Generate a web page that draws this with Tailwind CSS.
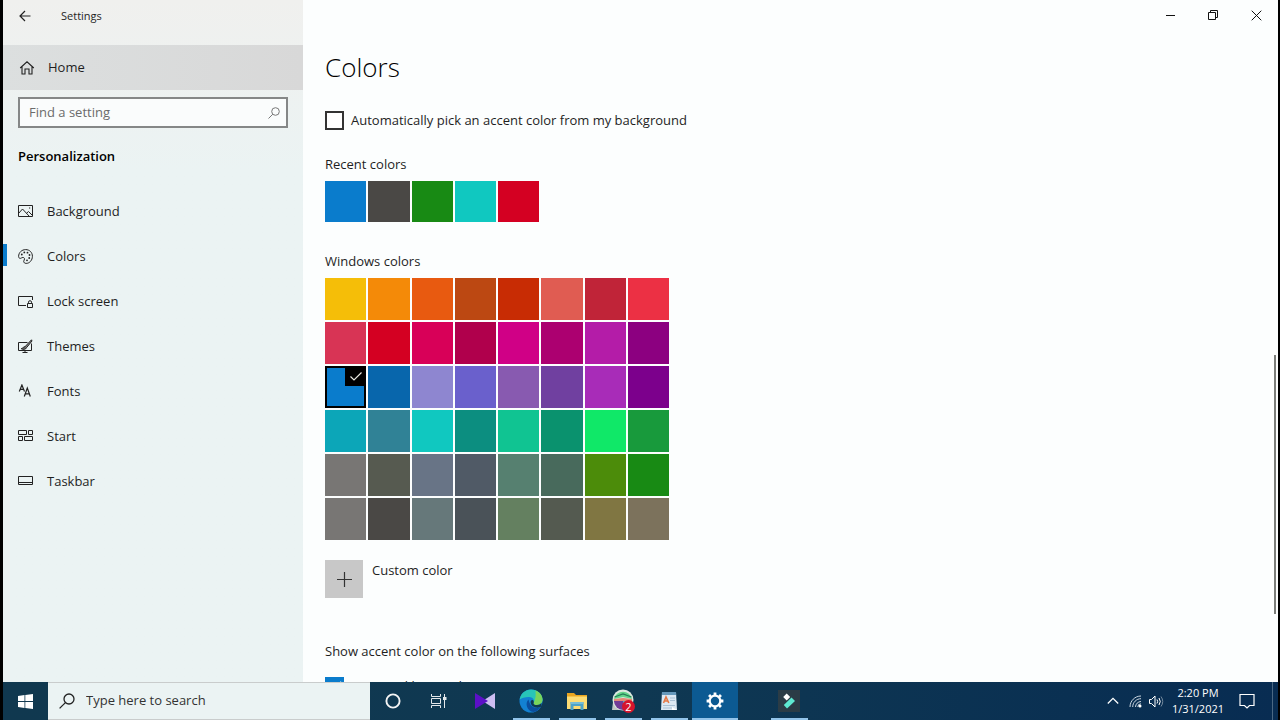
<!DOCTYPE html>
<html lang="en">
<head>
  <meta charset="UTF-8" />
  <meta name="viewport" content="width=device-width, initial-scale=1.0" />
  <title>Settings</title>
  <script src="https://cdn.jsdelivr.net/npm/@tailwindcss/browser@4"></script>
</head>
<body class="bg-black font-['Open_Sans','Noto_Sans',sans-serif] text-[13px] text-[#1f1f1f]">
  <div class="h-screen flex flex-col overflow-hidden border-l-3 border-r-2 border-black">
    <div class="flex flex-1 min-h-0">

      <!-- Sidebar -->
      <aside class="w-[300px] shrink-0 bg-linear-to-b from-[#f0f0ee] via-[#ebf3f3] via-25% to-[#ebf3f3]">
        <div class="h-8 flex items-center pl-4">
          <button type="button" aria-label="Back" class="w-[42px]">
            <svg class="w-3 h-3" viewBox="0 0 12 12" fill="none" stroke="#222" stroke-width="1.2"><path d="M11.5 6H1M6 1L1 6l5 5" /></svg>
          </button>
          <span class="text-[11px]">Settings</span>
        </div>
        <a href="#" class="mt-[13px] h-[45px] flex items-center pt-px pl-4 gap-[13px] bg-linear-to-r from-[#dcdfdf] to-[#d8d8d8]">
          <svg class="w-4 h-4" viewBox="0 0 16 16" fill="none" stroke="#222" stroke-width="1.1"><path d="M1.2 8L8 1.8 14.8 8M3 6.5V14h3V9h4v5h3V6.5" /></svg>
          <span>Home</span>
        </a>
        <div class="mt-[7px] ml-[15px] w-[270px] h-[31px] flex items-center border-2 border-[#858787] bg-[#fafcfc] pl-[9px] pr-1.5">
          <input type="text" aria-label="Find a setting" placeholder="Find a setting" class="flex-1 min-w-0 outline-none placeholder:text-[#6b6b6b]" />
          <svg class="w-3 h-3" viewBox="0 0 12 12" fill="none" stroke="#777" stroke-width="1"><circle cx="7.5" cy="4.5" r="3.8" /><path d="M4.800 7.200L.5 11.500" /></svg>
        </div>
        <h2 class="mt-[18px] pl-[15px] leading-5 font-semibold text-black">Personalization</h2>
        <nav class="mt-[23px]">
          <a href="#" class="h-[45px] flex items-center pl-[15px] gap-[14px]">
            <svg class="w-[15px] h-[15px]" viewBox="0 0 15 15" fill="none" stroke="#222"><path d="M.5 1.500h14v11H.5zM.5 9.500L4.500 5l7 7.500M8.500 9.300L10.500 7.500l4 4" /><path d="M11 4h1.200" /></svg>
            <span>Background</span>
          </a>
          <a href="#" aria-current="page" class="relative h-[45px] flex items-center pl-[15px] gap-[14px]">
            <span class="absolute left-0 top-[10px] w-1 h-[22px] bg-[#0a7ccc]"></span>
            <svg class="w-[15px] h-[15px]" viewBox="0 0 15 15" fill="none" stroke="#222"><path d="M.6 7.500C.6 3.500 3.800.6 7.700.6c3.900 0 6.700 2.900 6.700 6.700 0 4-2.900 7.100-6.200 7.100-1.500 0-2.500-.9-2.500-2 0-1 .8-1.400.8-2.400 0-1-.7-1.600-1.600-1.600-1.300 0-1.500 1-2.600 1C1.300 9.400.6 8.600.6 7.500z" /><g fill="#222" stroke="none"><circle cx="3.800" cy="5.500" r=".9" /><circle cx="6.300" cy="3.400" r=".9" /><circle cx="9.500" cy="3.700" r=".9" /><circle cx="11.500" cy="6" r=".9" /><circle cx="11.200" cy="9" r=".9" /><circle cx="9" cy="11.300" r=".9" /></g></svg>
            <span>Colors</span>
          </a>
          <a href="#" class="h-[45px] flex items-center pl-[15px] gap-[14px]">
            <svg class="w-[15px] h-[15px]" viewBox="0 0 15 15" fill="none" stroke="#222"><path d="M8 11.500H.5v-9h14V6M9.500 9.500h5v4h-5zM10.500 9.500V8.200a1.500 1.500 0 0 1 3 0v1.300" /></svg>
            <span>Lock screen</span>
          </a>
          <a href="#" class="h-[45px] flex items-center pl-[15px] gap-[14px]">
            <svg class="w-[15px] h-[15px]" viewBox="0 0 15 15" fill="none" stroke="#222"><path d="M9.500 3.500h-9v8h13v-7M7 11.500v2M4.500 13.500h5" /><path d="M13.500.8L7.200 7.500l1.300 1.200L14 2z" fill="#888" /><path d="M7 7.700c-1.500-.1-1.800 1.400-3.800 2 1.800 1.100 4.800.9 5.100-.9" fill="#666" /></svg>
            <span>Themes</span>
          </a>
          <a href="#" class="h-[45px] flex items-center pl-[15px] gap-[14px]">
            <svg class="w-[15px] h-[15px]" viewBox="0 0 15 15" fill="none" stroke="#222" stroke-width="1.200"><path d="M1.300 7.500L3.900 1l2.600 6.500M2.200 5.300h3.400M6.300 12.500l3-8.500 3 8.500M7.300 9.800h4" /></svg>
            <span>Fonts</span>
          </a>
          <a href="#" class="h-[45px] flex items-center pl-[15px] gap-[14px]">
            <svg class="w-[15px] h-[15px]" viewBox="0 0 15 15" fill="none" stroke="#222"><path d="M.5 1.500h8v4h-8zM10.500 1.500h4v4h-4zM.5 7.500h4v4h-4zM6.500 7.500h8v4h-8z" /></svg>
            <span>Start</span>
          </a>
          <a href="#" class="h-[45px] flex items-center pl-[15px] gap-[14px]">
            <svg class="w-[15px] h-[15px]" viewBox="0 0 15 15" fill="none" stroke="#222"><path d="M.5 2.500h14v8H.5zM.5 8.500h14" /></svg>
            <span>Taskbar</span>
          </a>
        </nav>
      </aside>

      <!-- Colors page -->
      <main class="relative flex-1 min-w-0 overflow-hidden bg-[#fcfefe]">
        <div class="h-[30px] flex justify-end">
          <button type="button" aria-label="Minimize" class="w-[43px] flex items-center justify-center">
            <svg class="w-[11px] h-[11px]" viewBox="0 0 11 11" fill="none" stroke="#111"><path d="M1 5.500h9" /></svg>
          </button>
          <button type="button" aria-label="Restore" class="w-[43px] flex items-center justify-center">
            <svg class="w-[11px] h-[11px]" viewBox="0 0 11 11" fill="none" stroke="#111"><path d="M.5 2.500h7v7h-7zM2.500 2.500v-2h7v7h-2" /></svg>
          </button>
          <button type="button" aria-label="Close" class="w-[43px] flex items-center justify-center">
            <svg class="w-[11px] h-[11px]" viewBox="0 0 11 11" fill="none" stroke="#111"><path d="M.7.7l9.600 9.600M10.300.7L.7 10.300" /></svg>
          </button>
        </div>
        <div class="pl-[22px]">
          <h1 class="mt-[21px] text-[26px] font-light leading-8 text-black">Colors</h1>
          <label class="mt-[28px] h-5 flex items-start gap-[7px] leading-[18px]">
            <input type="checkbox" class="appearance-none w-[19px] h-[19px] border-2 border-[#333] bg-white" />
            <span>Automatically pick an accent color from my background</span>
          </label>

          <h2 class="mt-[23px] leading-5">Recent colors</h2>
          <div id="recentColors" class="mt-[7px] w-[344px] grid grid-cols-8 gap-[2px]"></div>

          <h2 class="mt-[29px] leading-5">Windows colors</h2>
          <div id="windowsColors" class="mt-[7px] w-[344px] grid grid-cols-8 gap-[2px]"></div>

          <div class="mt-5 flex gap-[9px]">
            <button type="button" id="customColor" aria-labelledby="customLabel" class="w-[38px] h-[38px] flex items-center justify-center bg-[#c8c8c8]">
              <svg class="w-[15px] h-[15px]" viewBox="0 0 15 15" fill="none" stroke="#333" stroke-width="1.200"><path d="M7.500 0v15M0 7.500h15" /></svg>
            </button>
            <span id="customLabel" class="leading-5">Custom color</span>
          </div>

          <h2 class="mt-[43px] leading-5">Show accent color on the following surfaces</h2>
          <label class="mt-4 h-5 flex items-start gap-[7px] leading-[18px]">
            <span class="relative w-[19px] h-[19px]">
              <input type="checkbox" checked class="block appearance-none w-[19px] h-[19px] bg-[#0a7ccc]" />
              <svg class="absolute inset-0 w-[19px] h-[19px] pointer-events-none" viewBox="0 0 20 20" fill="none" stroke="#fff" stroke-width="1.300"><path d="M3 10l4.500 4.500L17 5" /></svg>
            </span>
            <span>Start, taskbar, and action center</span>
          </label>
        </div>
        <div class="absolute right-[2px] top-[355px] w-[2px] h-[259px] bg-[#7c7e7a]"></div>
      </main>
    </div>

    <!-- Taskbar -->
    <footer class="h-[38px] shrink-0 flex bg-linear-to-r from-[#10384f] via-[#0f3852] to-[#082c52]">
      <button type="button" aria-label="Start menu" class="w-[45px] flex items-center justify-center">
        <svg class="w-[15px] h-[15px]" viewBox="0 0 15 15" fill="#fff"><path d="M0 2l6.500-.9v6H0zM7.300 1L15 0v7.100H7.300zM0 7.900h6.500v6L0 13zM7.300 7.900H15V15l-7.700-1z" /></svg>
      </button>
      <label class="w-[322px] flex items-center gap-[11px] pl-[11px] border-y border-[#c9cccc] bg-[#ebf3f3]">
        <svg class="w-4 h-4" viewBox="0 0 16 16" fill="none" stroke="#222" stroke-width="1.300"><circle cx="10" cy="6" r="5" /><path d="M6.400 9.600L.6 15.400" /></svg>
        <input type="text" aria-label="Type here to search" placeholder="Type here to search" class="flex-1 min-w-0 outline-none placeholder:text-[#333]" />
      </label>
      <button type="button" aria-label="Cortana" class="w-[46px] flex items-center justify-center">
        <svg class="w-4 h-4" viewBox="0 0 16 16" fill="none" stroke="#f4f4f4" stroke-width="1.900"><circle cx="8" cy="8" r="6.600" /></svg>
      </button>
      <button type="button" aria-label="Task view" class="w-[46px] flex items-center justify-center">
        <svg class="w-4 h-4" viewBox="0 0 16 16" fill="none" stroke="#e4e9ec"><path d="M.5 1v2.500h9V1M.5 5.500h9v5h-9zM.5 15v-2.500h9V15M13.500 1v14" /><path d="M12 5.500h3.500" stroke-width="3" /></svg>
      </button>
      <button type="button" aria-label="Media player" class="w-[46px] flex items-center justify-center">
        <svg class="w-5 h-4" viewBox="0 0 20 16"><path d="M20 0v16L7.500 8z" fill="#cdbdf2" /><path d="M0 0l13 8L0 16z" fill="#5c10c8" /></svg>
      </button>
      <button type="button" aria-label="Edge" class="relative w-[46px] flex items-center justify-center">
        <svg class="w-6 h-6" viewBox="0 0 24 24"><circle cx="12" cy="12" r="11.500" fill="#1381d2" /><path d="M.7 10.500C1.700 4.700 6.300.5 12 .5c6.600 0 11.500 4.700 11.500 10 0 3.300-2.300 5.500-5.500 5.500-2.400 0-4-1-3.400-2.100 1-1.500.5-5.900-4.600-5.900-3.900 0-7.500 1-9.300 2.500z" fill="#28c5b8" /><path d="M16.500 1.500c4.200 1.600 7 5 7 9 0 3.300-2.300 5.500-5.500 5.500-2.400 0-4-1-3.400-2.100C16.500 11 17 6 16.500 1.500z" fill="#79d45c" /><path d="M9.500 10.500c-4 3.800-1.500 11.500 5 12.600 3-.6 5.700-2.600 7.200-5.100-3.800 1.900-10.400 1.400-12.200-7.500z" fill="#0b4e9e" /><path d="M14.600 13.900c-.6 1.100 1 2.100 3.400 2.100 1.900 0 3.400-.7 4.400-2l.2 3.600c-4.700 2.500-10.600.3-11-4.100-.2-1.800 1.300-3 2.400-2.200.7.600.9 1.700.6 2.600z" fill="#103850" /></svg>
        <span class="absolute bottom-0 left-[5px] w-[37px] h-[2px] bg-[#92c4ea]"></span>
      </button>
      <button type="button" aria-label="File Explorer" class="relative w-[46px] flex items-center justify-center">
        <svg class="w-5 h-[18px]" viewBox="0 0 20 18"><path d="M0 1h7l2 2h11v14H0z" fill="#e9a520" /><path d="M0 4.500h20V17H0z" fill="#fcdc74" /><path d="M3.500 10h13v8h-3v-4h-7v4h-3z" fill="#4da3c8" /><path d="M3.500 10h13v2h-13z" fill="#75bdd7" /></svg>
        <span class="absolute bottom-0 left-[5px] w-[37px] h-[2px] bg-[#92c4ea]"></span>
      </button>
      <button type="button" aria-label="Browser, 2 notifications" class="relative w-[46px] flex items-center justify-center">
        <svg class="w-6 h-6" viewBox="0 0 24 24"><path d="M2 13L1 21h10z" fill="#bfc6c4" /><circle cx="12" cy="11" r="10.500" fill="#dce8df" /><path d="M3 10a9.200 9.200 0 0 1 18 0l-9-2z" fill="#64d58a" /><path d="M3.500 8L12 5l8.500 3" fill="none" stroke="#277c57" stroke-width="1.300" /><path d="M3 10l9-1 9 1v3H3z" fill="#e38a76" /><path d="M3 12h18a9 9 0 0 1-18 0z" fill="#713b96" /><path d="M12 12h9l-3 6-6-2z" fill="#53a7ca" /></svg>
        <span class="absolute left-[22px] top-[18px] w-[13px] h-[13px] rounded-full bg-[#d5142d] text-white text-[11px] leading-[13px] text-center">2</span>
        <span class="absolute bottom-0 left-[5px] w-[37px] h-[2px] bg-[#92c4ea]"></span>
      </button>
      <button type="button" aria-label="WordPad" class="relative w-[46px] flex items-center justify-center">
        <svg class="w-[18px] h-5" viewBox="0 0 18 20"><path d="M2 1h14l1 18H1z" fill="#dce8f3" /><path d="M2 1h14v3H2z" fill="#6698bb" /><path d="M10 7h5M10 9.500h5M3 14.500h12M3 17h9" stroke="#a9c0d4" /><path d="M3.500 12L6 6l2.800 6M4.500 10h3.300" fill="none" stroke="#e57845" stroke-width="1.600" /><path d="M12 16l5 3h-5z" fill="#fff" /></svg>
        <span class="absolute bottom-0 left-[5px] w-[37px] h-[2px] bg-[#92c4ea]"></span>
      </button>
      <button type="button" aria-label="Settings" class="relative w-[46px] flex items-center justify-center bg-[#0c5a92]">
        <svg class="w-[18px] h-[18px]" viewBox="0 0 18 18" fill="none" stroke="#fff"><circle cx="9" cy="9" r="5.300" stroke-width="2.200" /><path d="M9 .6v3M9 14.400v3M.6 9h3M14.400 9h3M3.060 3.060l2.100 2.100M12.840 12.840l2.100 2.100M3.060 14.940l2.100-2.100M12.840 5.160l2.100-2.100" stroke-width="2.800" /></svg>
        <span class="absolute bottom-0 inset-x-0 h-[2px] bg-[#92c4ea]"></span>
      </button>
      <button type="button" aria-label="Filmora" class="relative ml-7 w-[46px] flex items-center justify-center">
        <svg class="w-[22px] h-[22px]" viewBox="0 0 22 22"><path d="M0 0h22v22H0z" fill="#2b3c46" /><path d="M8.700 3.500l3.500 3.500-3.500 3.500L5.200 7z" fill="#fff" /><path d="M13.500 7.500L17 11l-8 7.500L5.800 15z" fill="#5eead2" /></svg>
        <span class="absolute bottom-0 left-[5px] w-[37px] h-[2px] bg-[#92c4ea]"></span>
      </button>

      <div class="ml-auto flex items-center text-white">
        <button type="button" aria-label="Show hidden icons" class="w-[23px] flex justify-center">
          <svg class="w-3 h-3" viewBox="0 0 12 12" fill="none" stroke="#fff" stroke-width="1.300"><path d="M.8 8.500L6 3.300l5.200 5.200" /></svg>
        </button>
        <button type="button" aria-label="Network" class="w-[23px] flex justify-center">
          <svg class="w-[13px] h-[13px]" viewBox="0 0 13 13" fill="none" stroke="#cdd8e2"><path d="M1 12C1 5.900 5.900 1 12 1M3.700 12c0-4.600 3.700-8.300 8.300-8.300M6.500 12c0-3 2.500-5.500 5.500-5.500" /><circle cx="11" cy="11" r="1.500" fill="#fff" stroke="none" /><path d="M8.800 12a3.200 3.200 0 0 1 3.200-3.200" /></svg>
        </button>
        <button type="button" aria-label="Volume" class="w-[19px] flex justify-center">
          <svg class="w-[15px] h-[13px]" viewBox="0 0 15 13" fill="none" stroke="#fff"><path d="M.5 4.500h2L6 1v11L2.500 8.500h-2zM8 4.500q1.300 2 0 4M10 3q2.500 3.500 0 7" /><path d="M12 1.500q3.500 5 0 10" stroke="#71879c" /></svg>
        </button>
        <div class="w-16 text-center text-[11px] leading-4">
          <div>2:20 PM</div>
          <div>1/31/2021</div>
        </div>
        <button type="button" aria-label="Notifications" class="w-[34px] flex justify-center">
          <svg class="w-4 h-4" viewBox="0 0 16 16" fill="none" stroke="#fff" stroke-width="1.200"><path d="M1 1.500h14v11h-4.500L8 15l-2.500-2.500H1z" /></svg>
        </button>
        <div class="ml-2 mr-[5px] w-px h-[38px] bg-[#4a6884]"></div>
      </div>
    </footer>
  </div>

  <script>
    const recentColors = ["#0a7ccc", "#4a4845", "#188a14", "#10c8c0", "#d40022"];
    const windowsColors = [
      "#f5be08", "#f48a08", "#e85a10", "#bc4812", "#c82c04", "#e05c52", "#c02438", "#ec3044",
      "#d83455", "#d40022", "#d80058", "#b0004c", "#d00086", "#ac0070", "#b41ca8", "#8c0080",
      "#0a7ccc", "#0866ac", "#8e86d0", "#6a60cc", "#885ab0", "#7040a0", "#a82cb8", "#7c008c",
      "#0ca6b8", "#308296", "#10c8c0", "#0c8e80", "#10c492", "#0a926e", "#10e868", "#189a3c",
      "#787674", "#565a50", "#687486", "#505a66", "#568070", "#486a5c", "#4c8c0a", "#188a14",
      "#787674", "#4a4845", "#66787a", "#4a5258", "#648060", "#545a50", "#807642", "#7c725c"
    ];

    function addSwatch(container, color, height) {
      const button = document.createElement("button");
      button.type = "button";
      button.className = "swatch relative " + height;
      button.style.backgroundColor = color;
      button.setAttribute("aria-label", color);
      container.appendChild(button);
      return button;
    }

    function selectSwatch(button) {
      button.setAttribute("aria-pressed", "true");
      button.innerHTML = `
        <span class="absolute inset-0 border-2 border-black"></span>
        <span class="absolute right-0 top-0 w-[21px] h-5 flex items-center justify-center bg-black">
          <svg class="w-3 h-3" viewBox="0 0 12 12" fill="none" stroke="#e8e8e0" stroke-width="1.200"><path d="M.5 6.500L4 10l7.500-7.500" /></svg>
        </span>
      `;
    }

    const recent = document.getElementById("recentColors");
    recentColors.forEach((color) => addSwatch(recent, color, "h-[41px]"));

    const grid = document.getElementById("windowsColors");
    windowsColors.forEach((color) => addSwatch(grid, color, "h-[42px]"));
    selectSwatch(grid.children[16]);

    grid.addEventListener("click", function (e) {
      const button = e.target.closest(".swatch");
      if (!button) return;
      grid.querySelectorAll(".swatch").forEach((item) => {
        item.innerHTML = "";
        item.removeAttribute("aria-pressed");
      });
      selectSwatch(button);
    });
  </script>
</body>
</html>
